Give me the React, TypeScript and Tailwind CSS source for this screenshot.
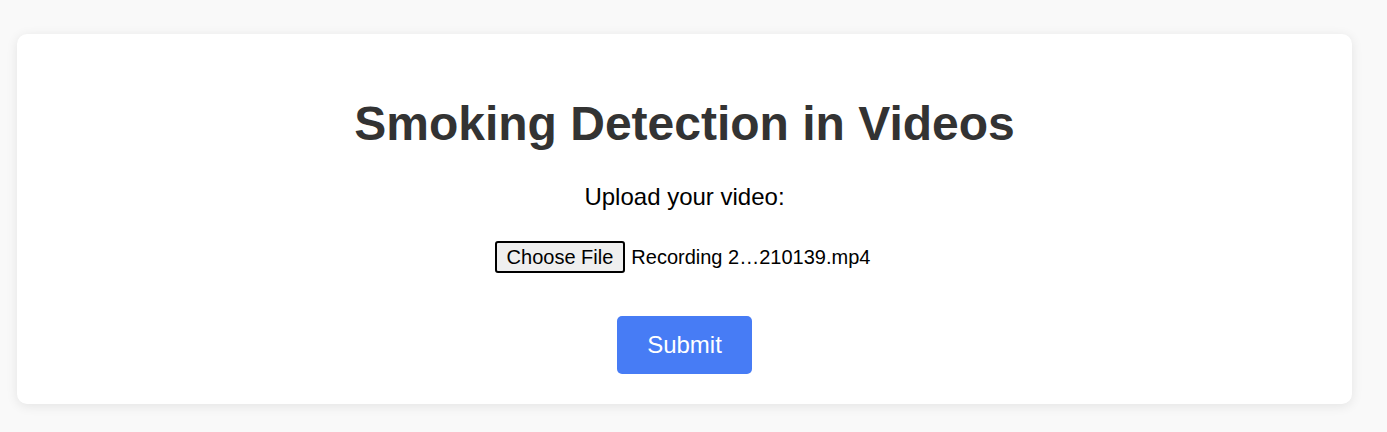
export default function App() {
  return (
    <div
      className="min-h-[432px] bg-[#f9f9f9] pl-[17px] pt-[34px] pb-[28px]"
      style={{ fontFamily: '"Liberation Sans", Arial, sans-serif' }}
    >
      <div className="w-[1335px] rounded-[10px] bg-white px-[30px] py-[30px] text-center shadow-[0_2px_12px_rgba(0,0,0,0.09)]">
        <h1 className="mt-[32px] mb-[32px] text-[48px] font-bold leading-[55px] text-[#333333]">
          Smoking Detection in Videos
        </h1>
        <form
          className="flex flex-col items-center"
          onSubmit={(e) => e.preventDefault()}
        >
          <label className="block text-[24px] leading-[28px] text-black">
            Upload your video:
          </label>
          <div className="mt-[30px] flex items-center pr-[4px] text-[20px] leading-[23px] text-black">
            <button
              type="button"
              className="rounded-[3px] border-2 border-black bg-[#efefef] px-[10px] pt-[3px] pb-[2px] text-black"
            >
              Choose File
            </button>
            <span className="ml-[6px] pt-[1px]">Recording 2…210139.mp4</span>
          </div>
          <button
            type="submit"
            className="mt-[43px] h-[58px] w-[135px] rounded-[5px] bg-[#477cf5] text-[24px] text-white"
          >
            Submit
          </button>
        </form>
      </div>
    </div>
  );
}
